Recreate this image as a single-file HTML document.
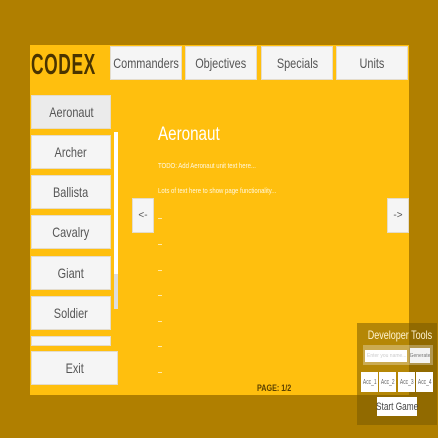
<!DOCTYPE html>
<html><head><style>
*{margin:0;padding:0;box-sizing:border-box}
body{width:438px;height:438px;background:#B07F00;position:relative;overflow:hidden;font-family:"Liberation Sans",sans-serif}
.a{position:absolute;white-space:nowrap}
.n{display:inline-block;transform:scaleX(0.78);white-space:nowrap}
.panel{left:30px;top:45px;width:379px;height:350px;background:#FFBF0E}
.btn{position:absolute;background:#F5F5F5;border:1px solid #e4dccb;color:#555;display:flex;align-items:center;justify-content:center;font-size:14px;white-space:nowrap;overflow:visible}
.w{color:#fff8e0;font-size:7.5px;transform:scaleX(0.8);transform-origin:left}
.dash{position:absolute;left:158px;width:4px;height:1px;background:#ffe9a8}
.dev{left:357px;top:323px;width:80px;height:102px;background:rgba(120,90,0,0.55)}
.acc{position:absolute;top:372px;height:20px;width:17px;background:#fff;color:#666;font-size:7px;display:flex;align-items:center;justify-content:center}
</style></head><body>
<div class="a panel"></div>
<div class="a" style="left:31px;top:49px;font-size:29px;font-weight:bold;color:#4a3400;letter-spacing:1px;transform:scaleX(0.6);transform-origin:left">CODEX</div>
<div class="btn" style="left:110px;top:46px;width:72px;height:34px"><span class="n">Commanders</span></div>
<div class="btn" style="left:185px;top:46px;width:72px;height:34px"><span class="n">Objectives</span></div>
<div class="btn" style="left:261px;top:46px;width:72px;height:34px"><span class="n">Specials</span></div>
<div class="btn" style="left:336px;top:46px;width:72px;height:34px"><span class="n">Units</span></div>

<div class="btn" style="left:31px;top:95px;width:80px;height:34px;background:#ebebeb"><span class="n">Aeronaut</span></div>
<div class="btn" style="left:31px;top:135px;width:80px;height:34px"><span class="n">Archer</span></div>
<div class="btn" style="left:31px;top:175px;width:80px;height:34px"><span class="n">Ballista</span></div>
<div class="btn" style="left:31px;top:215px;width:80px;height:34px"><span class="n">Cavalry</span></div>
<div class="btn" style="left:31px;top:256px;width:80px;height:34px"><span class="n">Giant</span></div>
<div class="btn" style="left:31px;top:296px;width:80px;height:34px"><span class="n">Soldier</span></div>
<div class="btn" style="left:31px;top:336px;width:80px;height:10px"></div>
<div class="a" style="left:114px;top:132px;width:4px;height:177px;background:#fff"></div>
<div class="a" style="left:114px;top:274px;width:4px;height:35px;background:#ddd"></div>
<div class="btn" style="left:31px;top:351px;width:87px;height:34px"><span class="n">Exit</span></div>

<div class="btn" style="left:132px;top:198px;width:22px;height:35px;font-size:10px">&lt;-</div>
<div class="btn" style="left:387px;top:198px;width:22px;height:35px;font-size:10px">-&gt;</div>

<div class="a" style="left:158px;top:124px;color:#fff;font-size:19px;transform:scaleX(0.8);transform-origin:left">Aeronaut</div>
<div class="a w" style="left:158px;top:161px">TODO: Add Aeronaut unit text here...</div>
<div class="a w" style="left:158px;top:186px">Lots of text here to show page functionality...</div>
<div class="dash" style="top:218px"></div><div class="dash" style="top:244px"></div><div class="dash" style="top:270px"></div><div class="dash" style="top:295px"></div><div class="dash" style="top:321px"></div><div class="dash" style="top:346px"></div><div class="dash" style="top:372px"></div>
<div class="a" style="left:257px;top:383px;font-size:9px;font-weight:bold;color:#5a4000;transform:scaleX(0.8);transform-origin:left">PAGE: 1/2</div>

<div class="a dev"></div>
<div class="a" style="left:357px;top:328px;width:80px;text-align:center;color:#fff3d0;font-size:12px"><span class="n" style="transform:scaleX(0.75)">Developer Tools</span></div>
<div class="a" style="left:363px;top:345px;width:70px;height:20px;background:rgba(255,255,255,0.3)"></div>
<div class="a" style="left:365px;top:350px;width:42px;height:12px;background:#fff;color:#ccc;font-size:5px;padding:3px 2px;overflow:hidden">Enter you name...</div>
<div class="a" style="left:410px;top:348px;width:20px;height:15px;background:#f3f3f3;color:#777;font-size:5px;display:flex;align-items:center;justify-content:center;overflow:hidden">Generate</div>
<div class="acc" style="left:361px"><span class="n" style="transform:scaleX(0.7)">Acc_1</span></div>
<div class="acc" style="left:379px"><span class="n" style="transform:scaleX(0.7)">Acc_2</span></div>
<div class="acc" style="left:398px"><span class="n" style="transform:scaleX(0.7)">Acc_3</span></div>
<div class="acc" style="left:416px"><span class="n" style="transform:scaleX(0.7)">Acc_4</span></div>
<div class="a" style="left:377px;top:397px;width:40px;height:19px;background:#fff;color:#444;font-size:11px;display:flex;align-items:center;justify-content:center"><span class="n" style="transform:scaleX(0.75)">Start Game</span></div>
</body></html>
